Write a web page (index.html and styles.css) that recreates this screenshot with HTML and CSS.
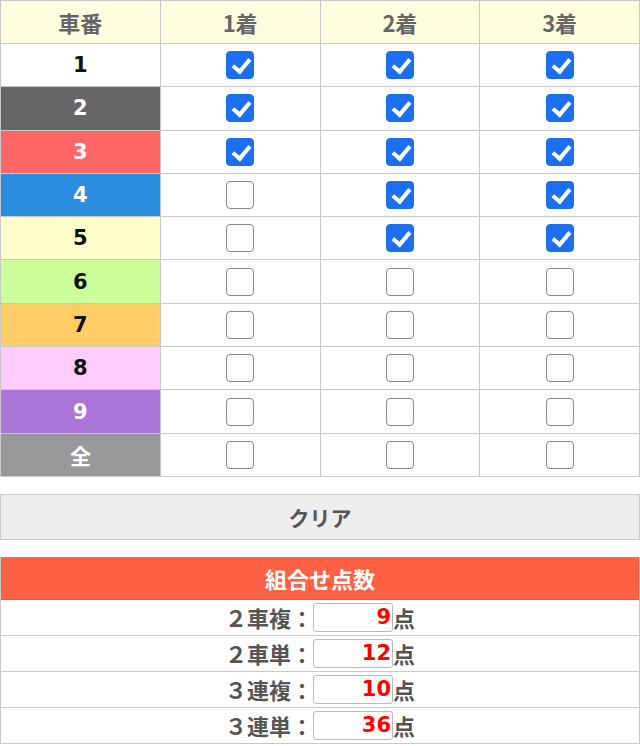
FILE: index.html
```html
<!DOCTYPE html>
<html lang="ja">
<head>
<meta charset="utf-8">
<link rel="stylesheet" href="styles.css">
</head>
<body>
<table class="grid">
  <thead>
    <tr><th>車番</th><th>1着</th><th>2着</th><th>3着</th></tr>
  </thead>
  <tbody>
    <tr><td class="car c1">1</td><td><span class="cb on"></span></td><td><span class="cb on"></span></td><td><span class="cb on"></span></td></tr>
    <tr><td class="car c2">2</td><td><span class="cb on"></span></td><td><span class="cb on"></span></td><td><span class="cb on"></span></td></tr>
    <tr><td class="car c3">3</td><td><span class="cb on"></span></td><td><span class="cb on"></span></td><td><span class="cb on"></span></td></tr>
    <tr><td class="car c4">4</td><td><span class="cb"></span></td><td><span class="cb on"></span></td><td><span class="cb on"></span></td></tr>
    <tr><td class="car c5">5</td><td><span class="cb"></span></td><td><span class="cb on"></span></td><td><span class="cb on"></span></td></tr>
    <tr><td class="car c6">6</td><td><span class="cb"></span></td><td><span class="cb"></span></td><td><span class="cb"></span></td></tr>
    <tr><td class="car c7">7</td><td><span class="cb"></span></td><td><span class="cb"></span></td><td><span class="cb"></span></td></tr>
    <tr><td class="car c8">8</td><td><span class="cb"></span></td><td><span class="cb"></span></td><td><span class="cb"></span></td></tr>
    <tr><td class="car c9">9</td><td><span class="cb"></span></td><td><span class="cb"></span></td><td><span class="cb"></span></td></tr>
    <tr><td class="car call">全</td><td><span class="cb"></span></td><td><span class="cb"></span></td><td><span class="cb"></span></td></tr>
  </tbody>
</table>

<div class="clear">クリア</div>

<div class="result">
  <div class="result-head">組合せ点数</div>
  <div class="result-row"><span class="label">２車複：</span><span class="box">9</span><span class="unit">点</span></div>
  <div class="result-row"><span class="label">２車単：</span><span class="box">12</span><span class="unit">点</span></div>
  <div class="result-row"><span class="label">３連複：</span><span class="box">10</span><span class="unit">点</span></div>
  <div class="result-row"><span class="label">３連単：</span><span class="box">36</span><span class="unit">点</span></div>
</div>
</body>
</html>
```

FILE: styles.css
```css
html, body {
  margin: 0;
  padding: 0;
  background: #fff;
}
body {
  font-family: "DejaVu Sans", "Noto Sans CJK JP", sans-serif;
  width: 640px;
}
.grid {
  width: 640px;
  border-collapse: collapse;
  table-layout: fixed;
}
.grid th, .grid td {
  border: 1px solid #c8c8c8;
  text-align: center;
  vertical-align: middle;
  padding: 0;
}
.grid th {
  height: 42px;
  background: #fefde0;
  color: #666;
  font-family: "Noto Sans CJK JP", sans-serif;
  font-size: 22px;
  font-weight: bold;
}
.grid td {
  height: 42.3px;
}
.car {
  font-size: 21px;
  font-weight: bold;
  color: #111;
}
.c1 { background: #fff; }
.c2 { background: #666; color: #fff; }
.c3 { background: #ff6666; color: #fff; }
.c4 { background: #2a8de0; color: #fff; }
.c5 { background: #ffffcc; }
.c6 { background: #ccff99; }
.c7 { background: #ffcc66; }
.c8 { background: #ffccff; }
.c9 { background: #ab74d8; color: #fff; }
.call { background: #999; color: #fff; font-family: "Noto Sans CJK JP", sans-serif; }

.cb {
  display: inline-block;
  width: 28px;
  height: 28px;
  box-sizing: border-box;
  border: 1px solid #8a8a8a;
  border-radius: 4px;
  background: #fff;
  vertical-align: middle;
  position: relative;
}
.cb.on {
  background: #1b6ff2;
  border-color: #1b6ff2;
}
.cb.on::after {
  content: "";
  position: absolute;
  left: 9px;
  top: 3px;
  width: 7px;
  height: 14px;
  border: solid #fff;
  border-width: 0 4px 4px 0;
  transform: rotate(40deg);
}

.clear {
  margin-top: 17px;
  height: 44px;
  border: 1px solid #c8c8c8;
  background: #eee;
  color: #555;
  font-family: "Noto Sans CJK JP", sans-serif;
  font-size: 21px;
  font-weight: bold;
  display: flex;
  align-items: center;
  justify-content: center;
}

.result {
  margin-top: 17px;
  border-left: 1px solid #c8c8c8;
  border-right: 1px solid #c8c8c8;
}
.result-head {
  height: 42px;
  background: #ff6145;
  border-bottom: 1px solid #e0573e;
  color: #fff;
  font-family: "Noto Sans CJK JP", sans-serif;
  font-size: 22px;
  font-weight: bold;
  display: flex;
  align-items: center;
  justify-content: center;
}
.result-row {
  height: 35px;
  border-bottom: 1px solid #c8c8c8;
  display: flex;
  align-items: center;
  justify-content: center;
  font-family: "Noto Sans CJK JP", sans-serif;
  font-size: 22px;
  font-weight: bold;
  color: #555;
}
.box {
  width: 80px;
  height: 29px;
  box-sizing: border-box;
  border: 1px solid #bbb;
  border-radius: 3px;
  background: #fff;
  color: #f00;
  text-align: right;
  font-family: "DejaVu Sans", sans-serif;
  font-size: 21px;
  font-weight: bold;
  line-height: 27px;
  padding-right: 1px;
}
.unit {
  color: #555;
}
```
